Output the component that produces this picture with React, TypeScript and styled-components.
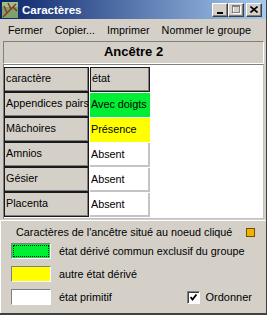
import React, { useState } from 'react';
import styled, { createGlobalStyle, css } from 'styled-components';

const GlobalStyle = createGlobalStyle`
  html, body {
    margin: 0;
    padding: 0;
    background: #d4d0c8;
  }
  body {
    font-family: 'Liberation Sans', Arial, sans-serif;
    font-size: 10.8px;
    color: #000;
  }
`;

const raised = css`
  border-top: 1px solid #ffffff;
  border-left: 1px solid #ffffff;
  border-right: 1px solid #404040;
  border-bottom: 1px solid #404040;
  box-shadow: inset -1px -1px #808080;
`;

const sunken = css`
  border-top: 1px solid #808080;
  border-left: 1px solid #808080;
  border-right: 1px solid #ffffff;
  border-bottom: 1px solid #ffffff;
`;

const Window = styled.div`
  width: 267px;
  height: 315px;
  box-sizing: border-box;
  background: #d4d0c8;
  display: flex;
  flex-direction: column;
  border-right: 1px solid #404040;
  border-bottom: 2px solid #404040;
  overflow: hidden;
`;

const TitleBar = styled.div`
  height: 19px;
  flex-shrink: 0;
  display: flex;
  align-items: center;
  padding: 0 4px 0 2px;
  background: linear-gradient(to right, #0a246a, #a6caf0);
`;

const Title = styled.span`
  color: #ffffff;
  font-weight: bold;
  font-size: 11.5px;
  margin-left: 4px;
  flex: 1;
`;

const CaptionButtons = styled.div`
  display: flex;
  align-items: center;
`;

const CaptionButton = styled.div<{ $gap?: boolean }>`
  width: 14px;
  height: 12px;
  background: #d4d0c8;
  ${raised};
  margin-left: ${(p) => (p.$gap ? '2px' : '0')};
  display: flex;
  align-items: center;
  justify-content: center;
`;

const MenuBar = styled.div`
  height: 21px;
  flex-shrink: 0;
  display: flex;
  align-items: center;
  padding-left: 3px;
  font-size: 10.8px;
`;

const MenuItem = styled.span`
  padding: 0 5px;
  margin-right: 2px;
`;

const Body = styled.div`
  flex: 1;
  display: flex;
  flex-direction: column;
  padding: 1px 2px 0 3px;
`;

const AncestorHeader = styled.div`
  height: 23px;
  box-sizing: border-box;
  ${sunken};
  display: flex;
  align-items: center;
  justify-content: center;
  font-weight: bold;
  font-size: 13px;
  padding-bottom: 2px;
`;

const TableArea = styled.div`
  height: 155px;
  box-sizing: border-box;
  background: #ffffff;
  border-top: 1px solid #808080;
  border-left: 1px solid #808080;
  border-right: 1px solid #c0c0c0;
  border-bottom: 1px solid #c0c0c0;
  padding: 2px 0 0 0;
`;

const Grid = styled.div`
  display: grid;
  grid-template-columns: 85px 60px;
  grid-auto-rows: 25px;
  column-gap: 1px;
`;

const HeadCell = styled.div`
  box-sizing: border-box;
  background: #d4d0c8;
  border: 1px solid #1a1a1a;
  box-shadow: inset -1px -1px #808080;
  padding: 4px 0 0 1px;
  white-space: nowrap;
  overflow: hidden;
`;

const ValueCell = styled.div<{ $bg: string; $edge: string }>`
  box-sizing: border-box;
  background: ${(p) => p.$bg};
  border-right: 2px solid ${(p) => p.$edge};
  border-bottom: 2px solid ${(p) => p.$edge};
  margin-top: 1px;
  display: flex;
  align-items: center;
  padding-left: 1px;
  white-space: nowrap;
  overflow: hidden;
`;

const LegendPanel = styled.div`
  margin-top: 1px;
  margin-left: -3px;
  margin-right: -2px;
  flex: 1;
  box-sizing: border-box;
  border-top: 1px solid #ffffff;
  border-left: 1px solid #ffffff;
  display: flex;
  flex-direction: column;
  padding: 5px 10px 0 10px;
`;

const LegendTitleRow = styled.div`
  display: flex;
  align-items: center;
  justify-content: space-between;
  height: 12px;
  padding-left: 5px;
`;

const OrangeMark = styled.div`
  width: 7px;
  height: 7px;
  background: #f0b400;
  border: 1px solid #705000;
  margin-right: 1px;
`;

const LegendRows = styled.div`
  display: flex;
  flex-direction: column;
  gap: 7px;
  margin-top: 5px;
`;

const LegendRow = styled.div`
  display: flex;
  align-items: center;
  height: 16px;
`;

const Swatch = styled.div<{ $bg: string; $focus?: boolean }>`
  width: 40px;
  height: 16px;
  box-sizing: border-box;
  background: ${(p) => p.$bg};
  border-top: 1px solid #808080;
  border-left: 1px solid #808080;
  border-right: 1px solid #ffffff;
  border-bottom: 1px solid #ffffff;
  outline: ${(p) => (p.$focus ? '1px dotted #000' : 'none')};
  outline-offset: -3px;
`;

const LegendLabel = styled.span`
  margin-left: 8px;
  flex: 1;
`;

const CheckLabel = styled.label`
  display: flex;
  align-items: center;
  gap: 6px;
  margin-right: 4px;
  font-size: 11px;
`;

const CheckBox = styled.div`
  width: 11px;
  height: 11px;
  background: #ffffff;
  border-top: 1px solid #808080;
  border-left: 1px solid #808080;
  border-right: 1px solid #ffffff;
  border-bottom: 1px solid #ffffff;
  box-shadow: inset 1px 1px #404040;
  display: flex;
  align-items: center;
  justify-content: center;
`;

const rows = [
  { name: 'Appendices pairs', value: 'Avec doigts', bg: '#00ee33', edge: '#00ee33' },
  { name: 'Mâchoires', value: 'Présence', bg: '#ffff00', edge: '#ffff00' },
  { name: 'Amnios', value: 'Absent', bg: '#ffffff', edge: '#c4c4c4' },
  { name: 'Gésier', value: 'Absent', bg: '#ffffff', edge: '#c4c4c4' },
  { name: 'Placenta', value: 'Absent', bg: '#ffffff', edge: '#c4c4c4' },
];

const AppIcon = () => (
  <svg width="16" height="16" viewBox="0 0 16 16">
    <rect x="0" y="0" width="16" height="16" fill="#7fa06a" />
    <rect x="0" y="0" width="16" height="5" fill="#9fbf8a" />
    <path d="M1 15 L14 2 M5 11 L2 4 M9 7 L6 1 M11 5 L15 9" stroke="#8a3a24" strokeWidth="1.5" fill="none" />
  </svg>
);

const App: React.FC = () => {
  const [ordered, setOrdered] = useState(true);

  return (
    <>
      <GlobalStyle />
      <Window>
        <TitleBar>
          <AppIcon />
          <Title>Caractères</Title>
          <CaptionButtons>
            <CaptionButton>
              <svg width="8" height="8" viewBox="0 0 8 8">
                <rect x="1" y="6" width="6" height="2" fill="#000" />
              </svg>
            </CaptionButton>
            <CaptionButton>
              <svg width="9" height="9" viewBox="0 0 9 9">
                <rect x="1.5" y="1.5" width="7" height="7" fill="none" stroke="#ffffff" />
                <rect x="0.5" y="0.5" width="7" height="7" fill="none" stroke="#808080" />
                <rect x="0.5" y="1" width="7" height="1" fill="#808080" />
              </svg>
            </CaptionButton>
            <CaptionButton $gap>
              <svg width="8" height="7" viewBox="0 0 8 7">
                <path d="M0.5 0.5 L7.5 6.5 M7.5 0.5 L0.5 6.5" stroke="#000" strokeWidth="1.6" />
              </svg>
            </CaptionButton>
          </CaptionButtons>
        </TitleBar>

        <MenuBar>
          <MenuItem>Fermer</MenuItem>
          <MenuItem>Copier...</MenuItem>
          <MenuItem>Imprimer</MenuItem>
          <MenuItem>Nommer le groupe</MenuItem>
        </MenuBar>

        <Body>
          <AncestorHeader>Ancêtre 2</AncestorHeader>

          <TableArea>
            <Grid>
              <HeadCell>caractère</HeadCell>
              <HeadCell>état</HeadCell>
              {rows.map((r) => (
                <React.Fragment key={r.name}>
                  <HeadCell>{r.name}</HeadCell>
                  <ValueCell $bg={r.bg} $edge={r.edge}>{r.value}</ValueCell>
                </React.Fragment>
              ))}
            </Grid>
          </TableArea>

          <LegendPanel>
            <LegendTitleRow>
              <span>Caractères de l'ancêtre situé au noeud cliqué</span>
              <OrangeMark />
            </LegendTitleRow>
            <LegendRows>
              <LegendRow>
                <Swatch $bg="#00ee33" $focus />
                <LegendLabel>état dérivé commun exclusif du groupe</LegendLabel>
              </LegendRow>
              <LegendRow>
                <Swatch $bg="#ffff00" />
                <LegendLabel>autre état dérivé</LegendLabel>
              </LegendRow>
              <LegendRow>
                <Swatch $bg="#ffffff" />
                <LegendLabel>état primitif</LegendLabel>
                <CheckLabel onClick={() => setOrdered(!ordered)}>
                  <CheckBox>
                    {ordered && (
                      <svg width="7" height="7" viewBox="0 0 7 7">
                        <path d="M0.5 3 L2.5 5.5 L6.5 0.5" stroke="#000" strokeWidth="1.8" fill="none" />
                      </svg>
                    )}
                  </CheckBox>
                  Ordonner
                </CheckLabel>
              </LegendRow>
            </LegendRows>
          </LegendPanel>
        </Body>
      </Window>
    </>
  );
};

export default App;
